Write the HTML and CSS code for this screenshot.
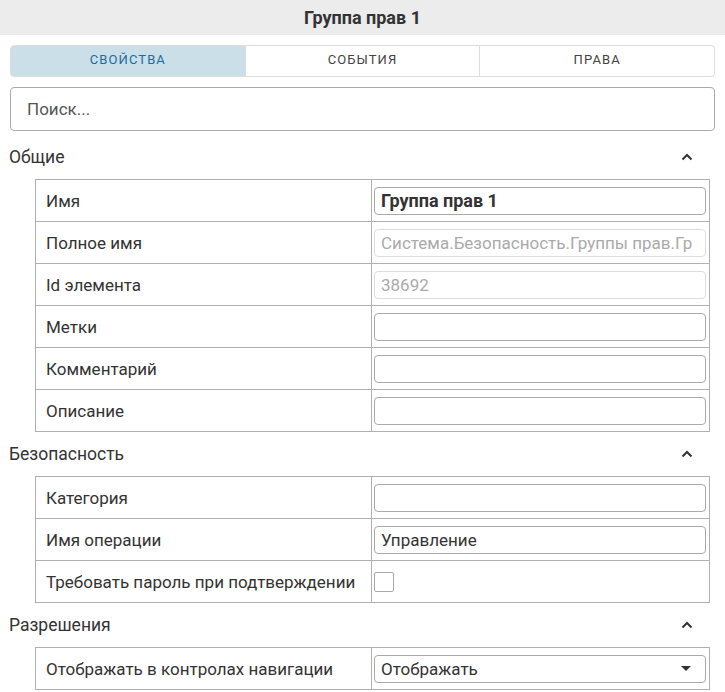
FILE: index.html
```html
<!DOCTYPE html>
<html>
<head>
  <meta charset="UTF-8">
  <title>Группа прав 1</title>
  <link rel="stylesheet" href="styles.css">
</head>
<body>
    <div class="Header">Группа прав 1</div>

    <div class="Content">
        <div class="Tabs">
            <div class="Tab active">СВОЙСТВА</div>
            <div class="Tab">СОБЫТИЯ</div>
            <div class="Tab">ПРАВА</div>
        </div>

        <input class="Search" type="text" placeholder="Поиск...">

        <div class="Section first">
            <span>Общие</span>
            <span class="chevron"><svg width="12" height="8" viewBox="0 0 12 8"><path d="M1.5 6.5 L6 2 L10.5 6.5" fill="none" stroke="#333" stroke-width="2"/></svg></span>
        </div>
        <table class="Props">
            <colgroup><col class="c1"><col class="c2"></colgroup>
            <tr><td class="label">Имя</td><td class="value"><div class="field bold">Группа прав 1</div></td></tr>
            <tr><td class="label">Полное имя</td><td class="value"><div class="field disabled">Система.Безопасность.Группы прав.Гр</div></td></tr>
            <tr><td class="label">Id элемента</td><td class="value"><div class="field disabled">38692</div></td></tr>
            <tr><td class="label">Метки</td><td class="value"><div class="field"></div></td></tr>
            <tr><td class="label">Комментарий</td><td class="value"><div class="field"></div></td></tr>
            <tr><td class="label">Описание</td><td class="value"><div class="field"></div></td></tr>
        </table>

        <div class="Section">
            <span>Безопасность</span>
            <span class="chevron"><svg width="12" height="8" viewBox="0 0 12 8"><path d="M1.5 6.5 L6 2 L10.5 6.5" fill="none" stroke="#333" stroke-width="2"/></svg></span>
        </div>
        <table class="Props">
            <colgroup><col class="c1"><col class="c2"></colgroup>
            <tr><td class="label">Категория</td><td class="value"><div class="field"></div></td></tr>
            <tr><td class="label">Имя операции</td><td class="value"><div class="field">Управление</div></td></tr>
            <tr><td class="label">Требовать пароль при подтверждении</td><td class="value"><div class="check"></div></td></tr>
        </table>

        <div class="Section">
            <span>Разрешения</span>
            <span class="chevron"><svg width="12" height="8" viewBox="0 0 12 8"><path d="M1.5 6.5 L6 2 L10.5 6.5" fill="none" stroke="#333" stroke-width="2"/></svg></span>
        </div>
        <table class="Props">
            <colgroup><col class="c1"><col class="c2"></colgroup>
            <tr><td class="label">Отображать в контролах навигации</td><td class="value"><div class="field select"><span>Отображать</span><span class="arrow"></span></div></td></tr>
        </table>
    </div>
</body>
</html>
```

FILE: styles.css
```css
body {
    font-family: Roboto, "Liberation Sans", sans-serif;
    margin: 0;
    background-color: white;
    color: #333;
}

.Header {
    height: 35px;
    line-height: 35px;
    background-color: #ececec;
    text-align: center;
    font-weight: bold;
    font-size: 18px;
    color: #333;
}

.Content {
    padding: 10px 10px 0 10px;
}

.Tabs {
    display: flex;
    height: 30px;
    border: 1px solid #ddd;
    border-radius: 4px;
    overflow: hidden;
}

.Tab {
    flex: 1;
    display: flex;
    align-items: center;
    justify-content: center;
    padding-bottom: 3px;
    font-size: 13px;
    letter-spacing: 1.1px;
    color: #444;
    border-left: 1px solid #ddd;
}

.Tab:first-child {
    border-left: none;
}

.Tab.active {
    background-color: #cadfe8;
    color: #1f6c9c;
}

.Search {
    display: block;
    box-sizing: border-box;
    width: 100%;
    height: 44px;
    margin-top: 10px;
    padding: 0 16px;
    border: 1px solid #aaa;
    border-radius: 4px;
    font-family: inherit;
    font-size: 17px;
    color: #333;
}

.Search::placeholder {
    color: #555;
}

.Section {
    display: flex;
    justify-content: space-between;
    align-items: center;
    height: 44px;
    margin-left: -1px;
    padding-right: 22px;
    font-size: 17.5px;
    color: #333;
}

.Section.first {
    margin-top: 4px;
}

.chevron {
    display: flex;
}

.Props {
    border-collapse: collapse;
    table-layout: fixed;
    margin-left: 25px;
    width: 675px;
}

.c1 {
    width: 336px;
}

.Props td {
    border: 1px solid #b0b0b0;
    height: 41px;
    padding: 0;
}

.label {
    padding-left: 10px !important;
    font-size: 17px;
    color: #333;
    white-space: nowrap;
}

.value {
    padding: 0 3px 0 2px !important;
}

.field {
    box-sizing: border-box;
    height: 28px;
    line-height: 26px;
    border: 1px solid #aaa;
    border-radius: 4px;
    padding: 0 6px;
    font-size: 17px;
    color: #333;
    white-space: nowrap;
    overflow: hidden;
}

.field.bold {
    font-weight: bold;
    font-size: 18px;
}

.field.disabled {
    border-color: #ddd;
    color: #aaa;
}

.check {
    box-sizing: border-box;
    width: 20px;
    height: 20px;
    border: 1px solid #aaa;
    border-radius: 2px;
}

.select {
    display: flex;
    justify-content: space-between;
    align-items: center;
}

.arrow {
    width: 0;
    height: 0;
    border-left: 5px solid transparent;
    border-right: 5px solid transparent;
    border-top: 5px solid #333;
    margin-right: 8px;
}
```
